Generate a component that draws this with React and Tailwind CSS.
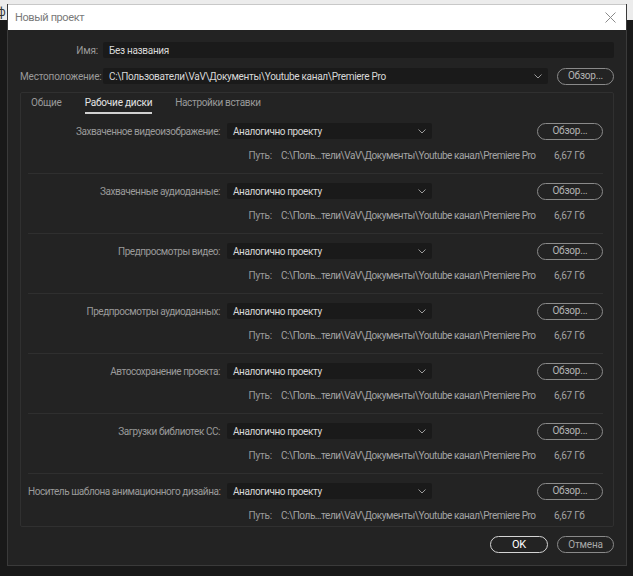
import React from 'react'

const font = { fontFamily: 'Roboto, "Noto Sans", sans-serif' }

const Chevron = () => (
  <svg width="8" height="5" viewBox="0 0 8 5" className="shrink-0">
    <path d="M0.5 0.5 L4 4 L7.5 0.5" fill="none" stroke="#9a9a9a" strokeWidth="1" />
  </svg>
)

const sections = [
  'Захваченное видеоизображение:',
  'Захваченные аудиоданные:',
  'Предпросмотры видео:',
  'Предпросмотры аудиоданных:',
  'Автосохранение проекта:',
  'Загрузки библиотек CC:',
  'Носитель шаблона анимационного дизайна:',
]

const Browse = ({ w }) => (
  <button className={`${w} h-[17px] shrink-0 rounded-full border border-[#8a8a8a] text-[#b4b4b4] text-[10px] leading-none flex items-center justify-center`}>
    Обзор...
  </button>
)

const Section = ({ label, last }) => (
  <div className={last ? 'ml-[7px] mr-[10px] pt-[9px] pb-[3px]' : 'ml-[7px] mr-[10px] pt-[9px] pb-[10px] border-b border-[#2f2f2f]'}>
    <div className="flex items-center h-[16px]">
      <div className="w-[192px] text-right text-[#9a9a9a] whitespace-nowrap tracking-[-0.45px] pt-[1px]">{label}</div>
      <div className="ml-[7px] w-[205px] h-[16px] bg-[#1a1a1a] rounded-[2px] flex items-center justify-between pl-[6px] pr-[6px]">
        <span className="text-[#d8d8d8] tracking-[-0.4px] pt-[1px]">Аналогично проекту</span>
        <Chevron />
      </div>
      <div className="ml-auto">
        <Browse w="w-[66px]" />
      </div>
    </div>
    <div className="flex items-center h-[14px] mt-[10px]">
      <div className="w-[244px] text-right text-[#9a9a9a]">Путь:</div>
      <div className="ml-[9px] w-[273px] text-[#a4a4a4] whitespace-nowrap overflow-hidden tracking-[-0.45px]">
        C:\Поль…тели\VaV\Документы\Youtube канал\Premiere Pro
      </div>
      <div className="text-[#a4a4a4] whitespace-nowrap">6,67 Гб</div>
    </div>
  </div>
)

export default function App() {
  return (
    <div className="relative w-[633px] h-[576px] overflow-hidden bg-[#191919] text-[10px] tracking-[-0.2px] leading-none" style={font}>
      <div className="absolute left-0 top-0 w-[633px] h-[20px] bg-[#ececec]" />
      <div className="absolute left-[-3px] top-[6px] text-[12px] text-[#333]">ф</div>
      <div className="absolute left-[7px] top-[4px] w-[620px] h-[562px] flex flex-col border-l border-r border-b border-[#3a3a3a] bg-[#232323]">
        <div className="h-[26px] shrink-0 bg-white flex items-center justify-between pl-[7px] pr-[10px] border-t border-[#c8c8c8]">
          <span className="text-[11px] tracking-[-0.4px] text-[#7a7a7a]">Новый проект</span>
          <svg width="11" height="11" viewBox="0 0 11 11">
            <path d="M0.5 0.5 L10.5 10.5 M10.5 0.5 L0.5 10.5" stroke="#8a8a8a" strokeWidth="1" />
          </svg>
        </div>
        <div className="flex flex-col px-[12px] pt-[12px]">
          <div className="flex items-center h-[16px]">
            <div className="w-[78px] text-right text-[#9a9a9a] pt-[1px]">Имя:</div>
            <div className="ml-[5px] flex-1 h-[16px] bg-[#1a1a1a] rounded-[2px] flex items-center pl-[6px] pt-[1px] text-[#d8d8d8] tracking-[-0.3px]">
              Без названия
            </div>
          </div>
          <div className="flex items-center h-[16px] mt-[10px]">
            <div className="w-[78px] text-right text-[#9a9a9a] whitespace-nowrap pt-[1px]">Местоположение:</div>
            <div className="ml-[5px] w-[445px] h-[16px] bg-[#1a1a1a] rounded-[2px] flex items-center justify-between pl-[6px] pr-[6px]">
              <span className="text-[#d8d8d8] whitespace-nowrap tracking-[-0.3px] pt-[1px]">C:\Пользователи\VaV\Документы\Youtube канал\Premiere Pro</span>
              <Chevron />
            </div>
            <div className="ml-auto">
              <Browse w="w-[57px]" />
            </div>
          </div>
          <div className="mt-[8px] h-[435px] border border-[#303030] rounded-[2px] flex flex-col">
            <div className="h-[21px] flex items-stretch pl-[10px] gap-[23px]">
              <div className="flex items-center text-[#9a9a9a] pb-[2px]">Общие</div>
              <div className="flex flex-col justify-center relative">
                <span className="text-[#e4e4e4] pb-[2px]">Рабочие диски</span>
                <div className="absolute left-0 right-0 bottom-0 h-[2px] bg-[#d0d0d0]" />
              </div>
              <div className="flex items-center text-[#9a9a9a] pb-[2px] tracking-[-0.35px]">Настройки вставки</div>
            </div>
            {sections.map((s, i) => (
              <Section key={s} label={s} last={i === sections.length - 1} />
            ))}
          </div>
          <div className="mt-[9px] flex justify-end gap-[9px]">
            <button className="w-[58px] h-[17px] rounded-full border border-[#d4d4d4] text-white text-[11px] leading-none flex items-center justify-center">OK</button>
            <button className="w-[57px] h-[17px] rounded-full border border-[#8a8a8a] text-[#a8a8a8] text-[10px] leading-none flex items-center justify-center">Отмена</button>
          </div>
        </div>
      </div>
    </div>
  )
}
